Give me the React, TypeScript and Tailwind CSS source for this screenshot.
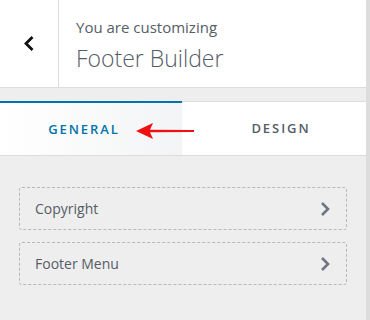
import React from "react";

const Chevron = () => (
  <svg width="10" height="16" viewBox="0 0 10 16" fill="none">
    <path d="M2 2 L8 8 L2 14" stroke="#6c7781" strokeWidth="2.6" strokeLinecap="butt" strokeLinejoin="miter" />
  </svg>
);

export default function App() {
  return (
    <div className="flex w-[370px] h-[320px] overflow-hidden bg-[#eeeeee]" style={{ fontFamily: '"Open Sans", "Noto Sans", sans-serif' }}>
      <div className="w-[366px] flex flex-col">
        <div className="flex h-[88px] bg-white border-b border-[#dddddd]">
          <div className="w-[59px] flex items-center justify-center border-r border-[#dddddd]">
            <svg width="12" height="17" viewBox="0 0 12 17" fill="none">
              <path d="M9.5 2 L3 8.5 L9.5 15" stroke="#111" strokeWidth="2.8" />
            </svg>
          </div>
          <div className="flex flex-col pl-[17px] pt-[16px]">
            <span className="text-[15px] leading-[22px] text-[#555d66]">You are customizing</span>
            <span className="text-[23px] leading-[30px] mt-[5px] font-light text-[#555d66]">Footer Builder</span>
          </div>
        </div>
        <div className="h-[13px]" />
        <div className="flex h-[55px] bg-white border-t border-b border-[#dddddd]">
          <div className="relative w-[182px] flex items-center justify-center pr-[14px] bg-gradient-to-r from-white to-[#f3f4f5] border-t-[2px] border-[#0073aa] -mt-px">
            <span className="text-[13px] font-semibold tracking-[0.15em] text-[#0073aa] pt-[2px]">GENERAL</span>
            <svg className="absolute left-[136px] top-[19px]" width="58" height="18" viewBox="0 0 58 18">
              <path d="M0 9 L17 1 L14 7.8 L58 8 L58 10 L14 10.2 L17 17 Z" fill="#ee1111" />
            </svg>
          </div>
          <div className="flex-1 flex items-center justify-center pl-[14px]">
            <span className="text-[13px] font-semibold tracking-[0.15em] text-[#555d66]">DESIGN</span>
          </div>
        </div>
        <div className="flex flex-col gap-[12px] px-[19px] pt-[31px]">
          {["Copyright", "Footer Menu"].map((t) => (
            <div key={t} className="flex items-center justify-between h-[43px] pl-[15px] pr-[16px] border border-dashed border-[#b4b9be] rounded-[3px]">
              <span className="text-[14px] text-[#555d66]">{t}</span>
              <Chevron />
            </div>
          ))}
        </div>
      </div>
      <div className="w-[4px] bg-[#dddddd]" />
    </div>
  );
}
